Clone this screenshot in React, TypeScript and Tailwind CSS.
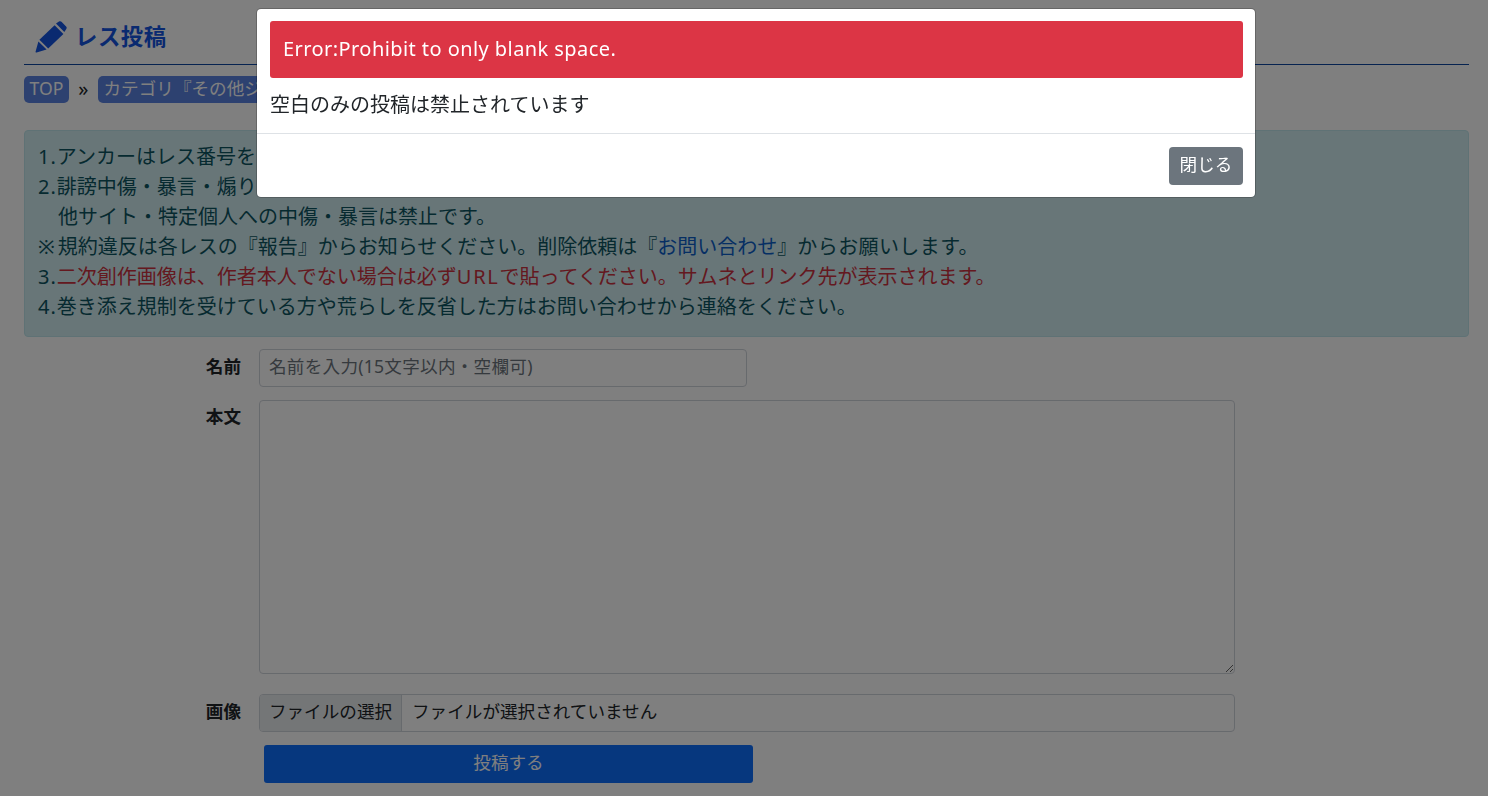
const FONT = "[font-family:'Noto_Sans','Noto_Sans_CJK_JP',sans-serif]";

function PencilIcon() {
  return (
    <svg viewBox="0 0 32 32" className="h-8 w-8 shrink-0" fill="currentColor">
      <path d="M21 2.6 24 .6c.9-.6 1.8-.5 2.5.2l4.6 4.6c.7.7.8 1.6.2 2.5l-2 3z" />
      <path d="M19.6 4.2 28.4 13 13.2 27.6 4.4 18.8z" />
      <path d="M3.4 20.4 11.6 28.6 1.6 31.4c-.7.2-1.2-.3-1-1z" />
    </svg>
  );
}

function FieldRow({
  label,
  children,
  className = "",
  labelClass = "leading-[34px]",
}: {
  label: string;
  children: React.ReactNode;
  className?: string;
  labelClass?: string;
}) {
  return (
    <div className={`grid grid-cols-[217px_1fr] gap-x-[18px] ${className}`}>
      <label className={`text-right text-[17.6px] font-bold text-[#212529] ${labelClass}`}>{label}</label>
      {children}
    </div>
  );
}

function ErrorModal() {
  return (
    <div className="fixed inset-0 z-10 bg-black/50">
      <div className="mt-2 ml-[256px] w-[1000px] rounded-[5px] border border-black/20 bg-white bg-clip-padding">
        <div className="pt-3 pr-3 pb-[13px] pl-[13px]">
          <div className="rounded-[3px] bg-[#dc3545] px-[13px] pt-3 pb-[14px] text-[20px] leading-[31px] tracking-[0.43px] text-white">
            Error:Prohibit to only blank space.
          </div>
          <p className="mt-3 text-[20px] leading-[30px] text-[#212529]">空白のみの投稿は禁止されています</p>
        </div>
        <div className="flex justify-end border-t border-[#dee2e6] px-3 pt-[13px] pb-3">
          <button className="h-[38px] w-[74px] rounded-[4px] bg-[#6c757d] pb-1 text-[17.6px] text-white">閉じる</button>
        </div>
      </div>
    </div>
  );
}

export default function App() {
  return (
    <div className={`h-screen overflow-hidden bg-white pr-[19px] pl-6 ${FONT}`}>
      <h1 className="flex h-[65px] items-center gap-2 border-b border-[#0d47a1] pt-[10px] pl-[11px] text-[22.4px] font-bold tracking-[0.5px] text-[#1454e0]">
        <PencilIcon />
        レス投稿
      </h1>

      <nav className="mt-[11px] flex h-[27px] items-center text-[17.6px] text-[#212529]">
        <a className="h-[27px] rounded-[5px] bg-[#5a82e0] px-[5.5px] leading-[24px] text-white">TOP</a>
        <span className="mx-[9.5px] pb-[2px] text-[20px] leading-none">»</span>
        <a className="h-[27px] rounded-[5px] bg-[#5a82e0] px-[5.5px] leading-[24px] text-white">カテゴリ『その他ジャンル』</a>
      </nav>

      <div className="mt-[27px] rounded-[4px] border border-[#bee5eb] bg-[#d1ecf1] pt-[11px] pr-[13px] pb-[14px] pl-[13px] text-[20px] leading-[30px] text-[#0c5460]">
        <p><span className="tracking-[1px]">1.</span>アンカーはレス番号をクリックで自動入力できます。</p>
        <p><span className="tracking-[1px]">2.</span>誹謗中傷・暴言・煽り・スレッドと無関係な投稿は削除・規制対象です。</p>
        <p className="pl-5">他サイト・特定個人への中傷・暴言は禁止です。</p>
        <p>
          <span className="tracking-[3px]">※</span>規約違反は各レスの『報告』からお知らせください。削除依頼は『<a className="text-[#0d5fc8]">お問い合わせ</a>』<span className="tracking-[0.4px]">からお願いします。</span>
        </p>
        <p>
          <span className="tracking-[1px]">3.</span><span className="text-[#c8323f]">二次創作画像は、作者本人でない場合は必ず<span className="tracking-[1.7px]">URL</span>で貼ってください。サムネとリンク先が表示されます。</span>
        </p>
        <p><span className="tracking-[1px]">4.</span>巻き添え規制を受けている方や荒らしを反省した方はお問い合わせから連絡をください。</p>
      </div>

      <form className="mt-3 w-[1211px]">
        <FieldRow label="名前">
          <input
            placeholder="名前を入力(15文字以内・空欄可)"
            className="h-[38px] w-[488px] rounded-[4px] border border-[#ced4da] bg-white px-[9px] pb-1 text-[17.6px] tracking-[0.25px] outline-none placeholder:text-[#6c757d]"
          />
        </FieldRow>
        <FieldRow label="本文" className="mt-[13px]" labelClass="leading-[32px]">
          <textarea className="block h-[274px] w-full rounded-[4px] border border-[#ced4da] bg-white outline-none" />
        </FieldRow>
        <FieldRow label="画像" className="mt-5">
          <div className="flex h-[38px] items-center overflow-hidden rounded-[4px] border border-[#ced4da] bg-white text-[17.6px] text-[#212529]">
            <span className="flex h-full w-[142px] items-center justify-center border-r border-[#ced4da] bg-[#e9ecef] pb-1">ファイルの選択</span>
            <span className="pb-1 pl-[10px]">ファイルが選択されていません</span>
          </div>
        </FieldRow>
        <button className="mt-[13px] ml-[240px] block h-[38px] w-[489px] rounded-[3px] bg-[#0d6efd] pb-1 text-[17.6px] text-white">投稿する</button>
      </form>

      <ErrorModal />
    </div>
  );
}
